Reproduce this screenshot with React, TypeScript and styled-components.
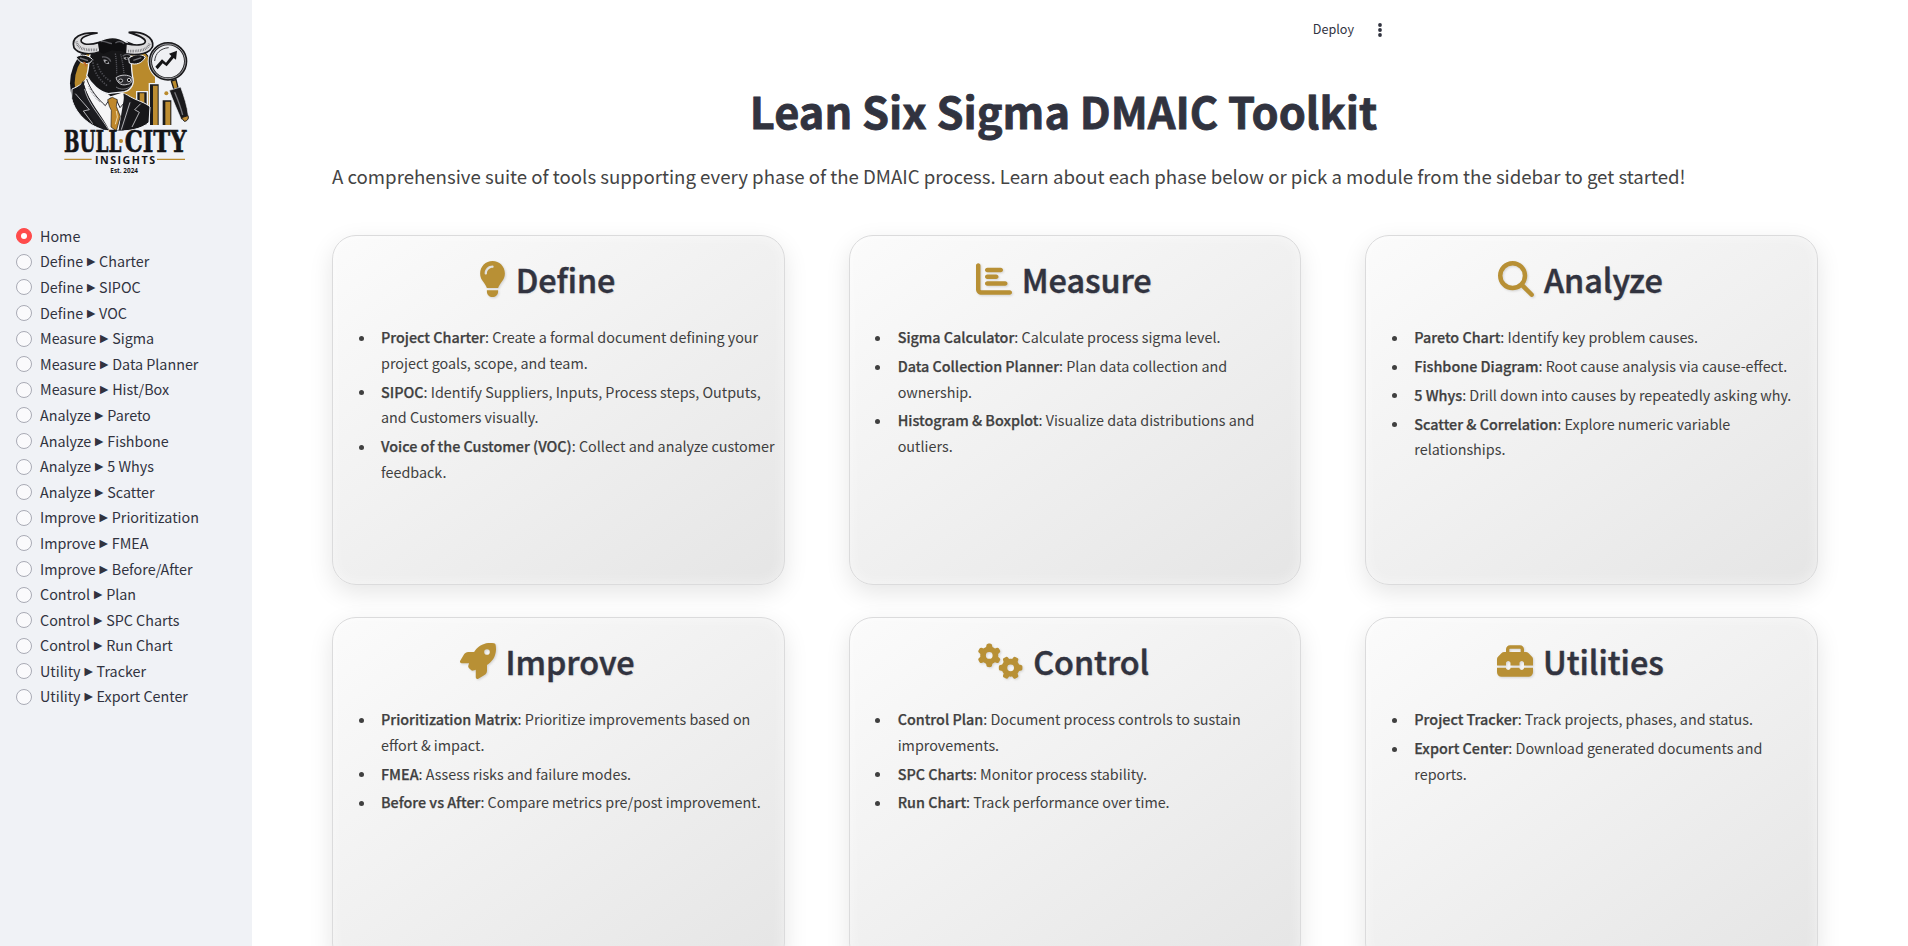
import React from "react";
import styled, { createGlobalStyle } from "styled-components";
import type { IconType } from "react-icons";
import {
  FaLightbulb,
  FaChartBar,
  FaMagnifyingGlass,
  FaRocket,
  FaGears,
  FaToolbox,
} from "react-icons/fa6";

const GlobalStyle = createGlobalStyle`
  * { box-sizing: border-box; }
  body {
    margin: 0;
    overflow: hidden;
    background: #ffffff;
    color: #31333f;
    font-family: "Noto Sans CJK SC", "Noto Sans", sans-serif;
  }
`;

const Shell = styled.div`
  display: flex;
  height: 946px;
  overflow: hidden;
`;

const Sidebar = styled.aside`
  width: 252px;
  flex: none;
  background: #f0f2f6;
  padding: 15px 16px 0;
`;

const LogoFrame = styled.div`
  height: 208.4px;
  padding-left: 24px;
`;

const RadioList = styled.ul`
  margin: 0;
  padding: 0;
  list-style: none;
`;

const RadioRow = styled.li`
  display: flex;
  align-items: center;
  gap: 8px;
  height: 25.6px;
  font-size: 14.33px;
  white-space: nowrap;
`;

const RadioLabel = styled.span`
  line-height: 24px;
  padding-bottom: 0.8px;
`;

const RadioMark = styled.span<{ $checked: boolean }>`
  display: flex;
  align-items: center;
  justify-content: center;
  width: 16px;
  height: 16px;
  flex: none;
  border-radius: 50%;
  border: 1px solid ${(p) => (p.$checked ? "#ff4b4b" : "#a9abb5")};
  background: ${(p) => (p.$checked ? "#ff4b4b" : "#fafafc")};

  &::after {
    content: "";
    width: 6px;
    height: 6px;
    border-radius: 50%;
    background: ${(p) => (p.$checked ? "#ffffff" : "transparent")};
  }
`;

const Pointer = styled.span`
  display: inline-flex;
  justify-content: center;
  width: 9.6px;
  line-height: 1;
  vertical-align: 1px;
  font-family: "Liberation Sans", sans-serif;
  font-size: 14px;
`;

const Main = styled.main`
  flex: 1;
  min-width: 0;
  padding: 0 90px 0 80px;
`;

const Header = styled.header`
  display: flex;
  justify-content: flex-end;
  align-items: center;
  gap: 18px;
  height: 59px;
  padding-right: 430px;
`;

const DeployButton = styled.span`
  padding-bottom: 2px;
  font-size: 12.6px;
  line-height: 20px;
`;

const Title = styled.h1`
  margin: 22px 0 0;
  padding-right: 23px;
  height: 58px;
  line-height: 58px;
  font-size: 43.35px;
  font-weight: 700;
  text-align: center;
  -webkit-text-stroke: 0.8px #31333f;
`;

const Subtitle = styled.p`
  margin: 21px 0 0;
  height: 32px;
  line-height: 32px;
  font-size: 18.64px;
  white-space: nowrap;
  color: #444444;
`;

const CardGrid = styled.section`
  display: grid;
  grid-template-columns: repeat(3, 1fr);
  grid-auto-rows: 350px;
  gap: 32px 64px;
  margin-top: 43px;
`;

const Card = styled.article`
  border: 1px solid #dbdbdc;
  border-radius: 24px;
  padding: 22px 8px 0 19px;
  background: linear-gradient(145deg, #fbfbfb, #e5e5e5);
  box-shadow:
    0 8px 24px rgba(0, 0, 0, 0.1),
    inset 0 0 14px rgba(255, 255, 255, 0.5);
`;

const CardHead = styled.h3`
  display: flex;
  align-items: center;
  justify-content: center;
  gap: 10px;
  margin: 0;
  padding-right: 33.5px;
  height: 43px;
  font-size: 32.3px;
  font-weight: 500;
  line-height: 43px;
  -webkit-text-stroke: 0.5px #31333f;
  text-shadow: 1px 1px 2px rgba(0, 0, 0, 0.1);
`;

const CardIcon = styled.span<{ $width: number }>`
  display: flex;
  flex: none;
  padding-bottom: 0.6px;
  color: #b89035;
  filter: drop-shadow(1px 1px 1px rgba(0, 0, 0, 0.14));

  svg {
    width: ${(p) => p.$width}px;
    height: 36px;
  }
`;

const ToolList = styled.ul`
  margin: 23.2px 0 0;
  padding: 0 0 0 29px;
  list-style: none;
  color: #404040;
  font-size: 14.35px;
  line-height: 25.6px;
`;

const ToolItem = styled.li`
  margin-bottom: 3.2px;

  &::before {
    content: "";
    display: inline-block;
    width: 5px;
    height: 5px;
    margin: 0 17.3px 0 -22.3px;
    border-radius: 50%;
    background: #404040;
    vertical-align: 2.4px;
  }
`;

const ToolName = styled.strong`
  font-weight: 500;
  -webkit-text-stroke: 0.25px #404040;
`;

const LogoWord = styled.text`
  font-family: "DejaVu Serif", serif;
  font-weight: 700;
  font-size: 88px;
  stroke: #151517;
  stroke-width: 2px;
`;

const LogoSans = styled.text`
  font-family: "Open Sans", sans-serif;
  font-weight: 700;
`;

const Logo = () => (
  <svg width="180" height="180" viewBox="0 0 540 540">
    <defs>
      <clipPath id="badge">
        <path d="M75 60H345V290L330 345H75Z" />
      </clipPath>
    </defs>
    {/* badge disc */}
    <g clipPath="url(#badge)">
      <circle cx="222" cy="205" r="132" fill="#17171a" />
      <circle cx="228" cy="204" r="124" fill="#b98a2c" />
    </g>
    {/* bar chart */}
    <g stroke="#f0f2f6" strokeWidth="4">
      <path d="M290 230H322V332H290Z" fill="#1a1a1c" />
      <path d="M328 206H358V332H328Z" fill="#1a1a1c" />
      <path d="M366 254H396V332H366Z" fill="#1a1a1c" />
    </g>
    <path d="M299 235H313V330H299ZM339 212H353V330H339ZM376 260H391V330H376Z" fill="#bd8d31" />
    <circle cx="379" cy="235" r="6" fill="#b98a2c" />
    {/* jacket */}
    <path
      d="M96 222C112 216 128 206 140 190L262 240C290 258 318 262 330 276L327 322C304 344 262 350 212 348C158 344 106 300 95 250Z"
      fill="#17171a"
      stroke="#f0f2f6"
      strokeWidth="3"
    />
    {/* shirt */}
    <path d="M138 186L212 244 250 232 256 262 236 346 208 346C190 306 146 262 132 208Z" fill="#f6f6f7" />
    <path d="M140 192C152 226 172 250 196 272L212 248M252 236L254 262 240 278 228 252" fill="none" stroke="#2a2a2e" strokeWidth="3" />
    <path d="M146 214C154 232 168 250 182 262" fill="none" stroke="#8e8e94" strokeWidth="5" strokeDasharray="2 3" />
    {/* lapels */}
    <path d="M130 196C132 232 168 286 206 344L190 344C156 318 130 280 116 218Z" fill="#1d1d21" />
    <path d="M254 236L276 258 252 346 236 346Z" fill="#1d1d21" />
    <path d="M106 236L148 284 130 288 158 326M302 266L284 284 298 292 276 336M134 222C142 262 178 300 206 344M270 262L244 344" fill="none" stroke="#d8d8dc" strokeWidth="2.4" />
    {/* tie */}
    <path d="M203 254L217 247 232 254 229 274 241 304 229 348 213 336 214 286 208 274Z" fill="#c0882b" stroke="#17171a" strokeWidth="2" />
    <path d="M229 288L232 306 226 328" stroke="#efd9a8" strokeWidth="3" fill="none" />
    {/* head and neck */}
    <path
      d="M148 128C152 96 174 76 200 70C226 64 256 72 268 92C276 120 272 156 278 186C284 206 274 224 254 230C236 234 218 232 206 236C180 232 152 206 140 182C146 164 146 146 148 128Z"
      fill="#161618"
      stroke="#f0f2f6"
      strokeWidth="4"
    />
    <path d="M108 126C124 116 146 120 158 134C150 150 124 152 108 126Z" fill="#161618" stroke="#f0f2f6" strokeWidth="3" />
    <path d="M266 130C284 116 304 116 316 126C308 144 288 152 268 144Z" fill="#161618" stroke="#f0f2f6" strokeWidth="3" />
    <path d="M120 129L144 137M280 136L304 128" stroke="#77777c" strokeWidth="4" />
    {/* horns */}
    <path
      d="M173 54C146 58 118 68 124 80C134 92 158 88 178 82L180 110C148 122 114 116 102 98C92 68 122 50 173 54Z"
      fill="#dcdcde"
      stroke="#17171a"
      strokeWidth="5"
    />
    <path
      d="M266 52C306 48 342 66 338 94C332 114 296 124 256 116L258 86C286 92 314 92 316 80C316 68 292 60 266 52Z"
      fill="#dcdcde"
      stroke="#17171a"
      strokeWidth="5"
    />
    <path d="M110 80C112 98 130 108 174 104M328 86C324 104 300 110 262 108" fill="none" stroke="#68686d" strokeWidth="8" strokeDasharray="2 3" />
    {/* forehead, brow and cheek highlights */}
    <path d="M174 84C184 72 200 82 214 84C228 76 244 76 256 90L258 116C250 108 240 106 232 108L216 106 190 116 178 110Z" fill="#0f0f11" />
    <path d="M182 80C194 76 204 86 216 86M226 84C236 78 246 80 252 86" fill="none" stroke="#5c5c61" strokeWidth="4" />
    <path d="M186 126C198 124 210 130 212 140M248 124C256 116 266 116 270 122" fill="none" stroke="#5c5c61" strokeWidth="4" />
    <path d="M190 134C198 132 206 138 208 146C200 150 192 144 190 134ZM250 128C258 124 266 126 268 130C262 136 254 136 250 128Z" fill="#a9a9ae" />
    <circle cx="200" cy="141" r="4" fill="#111" />
    <circle cx="260" cy="130" r="3" fill="#111" />
    <path d="M226 116C230 140 230 160 230 178M242 118C248 140 250 158 252 176" stroke="#5e5e64" strokeWidth="4" fill="none" strokeDasharray="3 3" />
    <path d="M158 134C160 168 174 192 204 214M172 146C178 168 190 186 214 200" stroke="#4c4c52" strokeWidth="5" fill="none" strokeDasharray="4 4" />
    {/* muzzle */}
    <path d="M228 188C242 178 264 178 275 187C279 198 272 208 262 208C250 212 234 210 228 188Z" fill="#2c2c30" stroke="#c9c9cd" strokeWidth="3" />
    <ellipse cx="242" cy="197" rx="6" ry="5" fill="#0d0d0e" stroke="#e2e2e4" strokeWidth="2.5" />
    <ellipse cx="267" cy="195" rx="5" ry="5" fill="#0d0d0e" stroke="#e2e2e4" strokeWidth="2.5" />
    <path d="M228 216C242 226 262 224 274 212" fill="none" stroke="#77777c" strokeWidth="3" />
    <path d="M130 142C137 144 139 150 136 154" fill="none" stroke="#c0682b" strokeWidth="5" />
    {/* magnifying glass */}
    <circle cx="384" cy="139" r="61" fill="#f0f2f6" />
    <circle cx="384" cy="139" r="53" fill="#eff0f3" stroke="#1a1a1c" strokeWidth="10" />
    <circle cx="384" cy="139" r="52" fill="none" stroke="#b9b9be" strokeWidth="2.5" />
    <path d="M344 138C346 114 362 100 386 98" fill="none" stroke="#3a3a3d" strokeWidth="3" />
    <path d="M346 155L366 133 378 143 394 123 387 116 411 107 408 134 401 129 380 154 368 145 353 163Z" fill="#151517" />
    <path d="M394 198L408 194 414 218 402 224Z" fill="#b98a2c" stroke="#1a1a1c" strokeWidth="4" />
    <path d="M388 226L422 216C432 244 442 274 445 302L424 314C412 286 398 254 388 226Z" fill="#1a1a1c" stroke="#f0f2f6" strokeWidth="2" />
    <path d="M404 232C414 256 423 280 428 300" stroke="#77777c" strokeWidth="4" fill="none" />
    <path d="M424 308L444 302C448 312 440 319 433 319Z" fill="#c08c32" stroke="#1a1a1c" strokeWidth="3" />
    {/* wordmark */}
    <g fill="#151517">
      <LogoWord x="72" y="410" textLength="172" lengthAdjust="spacingAndGlyphs">BULL</LogoWord>
      <LogoWord x="254" y="410" textLength="185" lengthAdjust="spacingAndGlyphs">CITY</LogoWord>
      <LogoSans x="165" y="446" fontSize="32" textLength="180" lengthAdjust="spacing">INSIGHTS</LogoSans>
      <LogoSans x="211" y="474" fontSize="22" textLength="83" lengthAdjust="spacingAndGlyphs">Est. 2024</LogoSans>
    </g>
    <circle cx="243" cy="378" r="6" fill="#b98a2c" />
    <path d="M73 433H155M351 433H435" stroke="#b98a2c" strokeWidth="4" />
  </svg>
);

const KebabIcon = () => (
  <svg width="16" height="16" viewBox="0 0 16 16" fill="#31333f">
    <circle cx="8" cy="3" r="1.9" />
    <circle cx="8" cy="8" r="1.9" />
    <circle cx="8" cy="13" r="1.9" />
  </svg>
);

const modules: string[][] = [
  ["Home"],
  ["Define", "Charter"],
  ["Define", "SIPOC"],
  ["Define", "VOC"],
  ["Measure", "Sigma"],
  ["Measure", "Data Planner"],
  ["Measure", "Hist/Box"],
  ["Analyze", "Pareto"],
  ["Analyze", "Fishbone"],
  ["Analyze", "5 Whys"],
  ["Analyze", "Scatter"],
  ["Improve", "Prioritization"],
  ["Improve", "FMEA"],
  ["Improve", "Before/After"],
  ["Control", "Plan"],
  ["Control", "SPC Charts"],
  ["Control", "Run Chart"],
  ["Utility", "Tracker"],
  ["Utility", "Export Center"],
];

interface Phase {
  name: string;
  icon: IconType;
  iconWidth: number;
  tools: [string, string][];
}

const phases: Phase[] = [
  {
    name: "Define",
    icon: FaLightbulb,
    iconWidth: 27,
    tools: [
      ["Project Charter", "Create a formal document defining your project goals, scope, and team."],
      ["SIPOC", "Identify Suppliers, Inputs, Process steps, Outputs, and Customers visually."],
      ["Voice of the Customer (VOC)", "Collect and analyze customer feedback."],
    ],
  },
  {
    name: "Measure",
    icon: FaChartBar,
    iconWidth: 36,
    tools: [
      ["Sigma Calculator", "Calculate process sigma level."],
      ["Data Collection Planner", "Plan data collection and ownership."],
      ["Histogram & Boxplot", "Visualize data distributions and outliers."],
    ],
  },
  {
    name: "Analyze",
    icon: FaMagnifyingGlass,
    iconWidth: 36,
    tools: [
      ["Pareto Chart", "Identify key problem causes."],
      ["Fishbone Diagram", "Root cause analysis via cause-effect."],
      ["5 Whys", "Drill down into causes by repeatedly asking why."],
      ["Scatter & Correlation", "Explore numeric variable relationships."],
    ],
  },
  {
    name: "Improve",
    icon: FaRocket,
    iconWidth: 36,
    tools: [
      ["Prioritization Matrix", "Prioritize improvements based on effort & impact."],
      ["FMEA", "Assess risks and failure modes."],
      ["Before vs After", "Compare metrics pre/post improvement."],
    ],
  },
  {
    name: "Control",
    icon: FaGears,
    iconWidth: 45,
    tools: [
      ["Control Plan", "Document process controls to sustain improvements."],
      ["SPC Charts", "Monitor process stability."],
      ["Run Chart", "Track performance over time."],
    ],
  },
  {
    name: "Utilities",
    icon: FaToolbox,
    iconWidth: 36,
    tools: [
      ["Project Tracker", "Track projects, phases, and status."],
      ["Export Center", "Download generated documents and reports."],
    ],
  },
];

export default function App() {
  return (
    <>
      <GlobalStyle />
      <Shell>
        <Sidebar>
          <LogoFrame>
            <Logo />
          </LogoFrame>
          <RadioList>
            {modules.map(([phase, tool], i) => (
              <RadioRow key={i}>
                <RadioMark $checked={i === 0} />
                <RadioLabel>
                  {phase}
                  {tool && (
                    <>
                      {" "}
                      <Pointer>►</Pointer> {tool}
                    </>
                  )}
                </RadioLabel>
              </RadioRow>
            ))}
          </RadioList>
        </Sidebar>
        <Main>
          <Header>
            <DeployButton>Deploy</DeployButton>
            <KebabIcon />
          </Header>
          <Title>Lean Six Sigma DMAIC Toolkit</Title>
          <Subtitle>
            A comprehensive suite of tools supporting every phase of the DMAIC process. Learn about each phase below or
            pick a module from the sidebar to get started!
          </Subtitle>
          <CardGrid>
            {phases.map(({ name, icon: Icon, iconWidth, tools }) => (
              <Card key={name}>
                <CardHead>
                  <CardIcon $width={iconWidth}>
                    <Icon />
                  </CardIcon>
                  {name}
                </CardHead>
                <ToolList>
                  {tools.map(([tool, text]) => (
                    <ToolItem key={tool}>
                      <ToolName>{tool}</ToolName>: {text}
                    </ToolItem>
                  ))}
                </ToolList>
              </Card>
            ))}
          </CardGrid>
        </Main>
      </Shell>
    </>
  );
}
